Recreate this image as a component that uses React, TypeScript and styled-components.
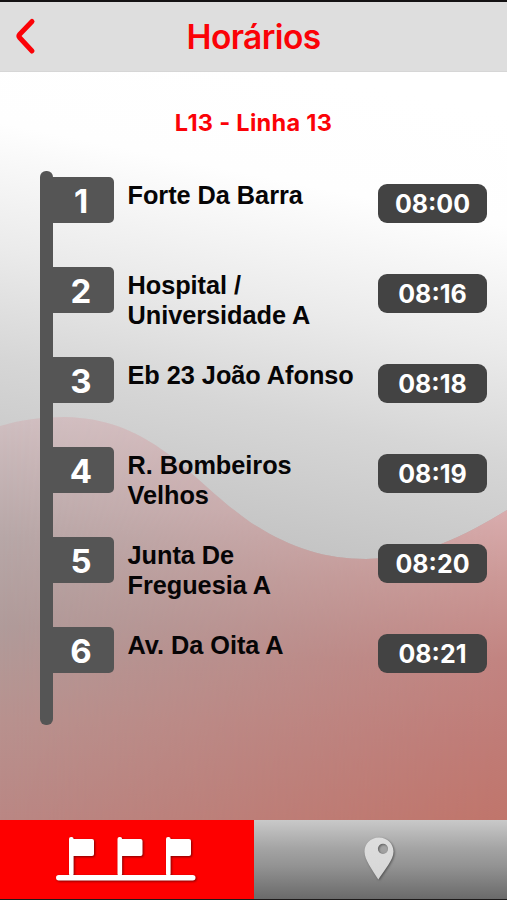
import React from "react";
import styled, { createGlobalStyle } from "styled-components";

const GlobalStyle = createGlobalStyle`
  * { box-sizing: border-box; }
  body { margin: 0; background: #fff; }
`;

const Screen = styled.div`
  width: 507px;
  height: 900px;
  display: flex;
  flex-direction: column;
  overflow: hidden;
  border-top: 2px solid #141213;
  border-bottom: 1px solid #1c1a1a;
  font-family: Inter, "Liberation Sans", sans-serif;
`;

const Header = styled.header`
  height: 70px;
  flex: none;
  display: grid;
  grid-template-columns: 52px 1fr 52px;
  align-items: center;
  background: #dedede;
  border-bottom: 1px solid #d6d6d6;
`;

const BackButton = styled.button`
  border: 0;
  padding: 0;
  margin: 0;
  background: none;
  width: 52px;
  height: 69px;
  svg { display: block; }
`;

const Title = styled.h1`
  margin: 0;
  padding-top: 1px;
  text-align: center;
  font-size: 33.5px;
  line-height: 40px;
  font-weight: 620;
  letter-spacing: -0.6px;
  color: #fb0207;
`;

const Main = styled.main`
  position: relative;
  flex: 1;
  min-height: 0;
  display: flex;
  flex-direction: column;
`;

const Backdrop = styled.svg`
  position: absolute;
  inset: 0;
  width: 507px;
  height: 748px;
  z-index: -1;
`;

const LineName = styled.h2`
  margin: 36px 0 0;
  height: 30px;
  text-align: center;
  font-size: 23.5px;
  line-height: 30px;
  font-weight: 700;
  letter-spacing: 0.3px;
  color: #fb0207;
`;

const Timetable = styled.div`
  display: flex;
  margin: 33px 20px 0 40px;
`;

const Pole = styled.div`
  width: 13px;
  height: 554px;
  flex: none;
  border-radius: 6px;
  background: #555;
`;

const Stops = styled.ol`
  list-style: none;
  margin: 0;
  padding: 6px 0 0;
  flex: 1;
`;

const Stop = styled.li`
  height: 90.08px;
  display: grid;
  grid-template-columns: 61px 1fr 109px;
  align-items: start;
`;

const Flag = styled.span`
  height: 46px;
  border-radius: 0 5px 5px 0;
  background: #555;
  color: #fff;
  font-size: 33px;
  line-height: 48px;
  font-weight: 700;
  text-align: center;
  padding-right: 5px;
`;

const StopName = styled.span`
  padding: 3px 0 0 13.5px;
  white-space: pre-line;
  font-family: "Liberation Sans", Arial, sans-serif;
  font-size: 25.3px;
  line-height: 30px;
  font-weight: 700;
  letter-spacing: -0.03px;
  color: #060506;
`;

const Time = styled.time`
  margin-top: 7px;
  height: 39px;
  border-radius: 9px;
  background: #434343;
  color: #fff;
  font-size: 25px;
  line-height: 40px;
  font-weight: 650;
  letter-spacing: 0;
  text-align: center;
`;

const TabBar = styled.nav`
  height: 79px;
  flex: none;
  display: flex;
`;

const Tab = styled.button<{ $active?: boolean }>`
  border: 0;
  padding: 0;
  flex: ${(p) => (p.$active ? "0 0 254px" : "1")};
  background: ${(p) =>
    p.$active
      ? "#fe0000"
      : "linear-gradient(#c9c9c9 0%, #a2a2a2 38%, #939393 58%, #6a6a6a 100%)"};
  svg { display: block; }
`;

const stops = [
  { name: "Forte Da Barra", time: "08:00" },
  { name: "Hospital /\nUniversidade A", time: "08:16" },
  { name: "Eb 23 João Afonso", time: "08:18" },
  { name: "R. Bombeiros\nVelhos", time: "08:19" },
  { name: "Junta De\nFreguesia A", time: "08:20" },
  { name: "Av. Da Oita A", time: "08:21" },
];

const WAVE =
  "M0 426 C20 420 42 417 65 417 C155 419 190 480 250 522 C290 548 325 559 366 559 C420 558 465 536 507 510 V820 H0Z";

function WaveBackdrop() {
  return (
    <Backdrop viewBox="0 72 507 748" aria-hidden="true">
      <defs>
        <linearGradient id="sky" gradientUnits="userSpaceOnUse" x1="300" y1="72" x2="190" y2="610">
          <stop offset="0" stopColor="#fff" />
          <stop offset="0.2" stopColor="#fefefe" />
          <stop offset="0.42" stopColor="#ebebeb" />
          <stop offset="0.62" stopColor="#d6d6d6" />
          <stop offset="1" stopColor="#b9b9b9" />
        </linearGradient>
        <linearGradient id="cool" gradientUnits="userSpaceOnUse" x1="0" y1="417" x2="0" y2="820">
          <stop offset="0" stopColor="#d0bfc1" />
          <stop offset="0.3" stopColor="#b7a7a7" />
          <stop offset="0.52" stopColor="#b09b9a" />
          <stop offset="0.75" stopColor="#b8928f" />
          <stop offset="1" stopColor="#ba8784" />
        </linearGradient>
        <linearGradient id="warm" gradientUnits="userSpaceOnUse" x1="0" y1="417" x2="0" y2="820">
          <stop offset="0" stopColor="#e0babd" />
          <stop offset="0.23" stopColor="#d9adae" />
          <stop offset="0.4" stopColor="#cc9896" />
          <stop offset="0.6" stopColor="#c28481" />
          <stop offset="0.8" stopColor="#c07b76" />
          <stop offset="1" stopColor="#c0756b" />
        </linearGradient>
        <linearGradient id="across">
          <stop offset="0" stopColor="#000" />
          <stop offset="1" stopColor="#fff" />
        </linearGradient>
        <mask id="fade" maskUnits="userSpaceOnUse" x="0" y="410" width="507" height="410">
          <rect x="0" y="410" width="507" height="410" fill="url(#across)" />
        </mask>
      </defs>
      <rect x="0" y="72" width="507" height="748" fill="url(#sky)" />
      <path d={WAVE} fill="url(#cool)" />
      <path d={WAVE} fill="url(#warm)" mask="url(#fade)" />
    </Backdrop>
  );
}

function StopsIcon() {
  return (
    <svg width="254" height="79" viewBox="0 0 254 79" fill="#fff">
      <g style={{ filter: "drop-shadow(1.2px 1.2px 0.8px rgba(90,0,0,.75))" }}>
        <rect x="56" y="55" width="139.500" height="5.500" rx="2.750" />
        {[69, 117.500, 166].map((x) => (
          <g key={x}>
            <rect x={x} y="17" width="4.600" height="39" rx="2" />
            <rect x={x + 2} y="19" width="23" height="17" rx="2" />
          </g>
        ))}
      </g>
    </svg>
  );
}

function PinIcon() {
  return (
    <svg width="253" height="79" viewBox="0 0 253 79">
      <defs>
        <linearGradient id="pin" x1="0" y1="0" x2="0" y2="1">
          <stop offset="0" stopColor="#dedede" />
          <stop offset="1" stopColor="#d6d6d6" />
        </linearGradient>
      </defs>
      <path
        style={{ filter: "drop-shadow(1px 1px 1px rgba(60,60,60,.7))" }}
        fill="url(#pin)"
        fillRule="evenodd"
        d="M125 17.500C116.500 17.500 110.500 24 110.500 31.500C110.500 40 118 49 124.300 59.500C131 49 139.500 40 139.500 31.500C139.500 24 133.500 17.500 125 17.500ZM129 23.700a5.100 5.100 0 1 1 0 10.200a5.100 5.100 0 1 1 0-10.200Z"
      />
    </svg>
  );
}

export default function App() {
  return (
    <Screen>
      <GlobalStyle />
      <Header>
        <BackButton aria-label="Voltar">
          <svg width="52" height="69" viewBox="0 0 52 69" fill="none">
            <path
              d="M32 19.500 L19.500 32.500 Q18.300 34 19.500 35.500 L32 49"
              stroke="#fb0207"
              strokeWidth="5"
              strokeLinecap="round"
              strokeLinejoin="round"
            />
          </svg>
        </BackButton>
        <Title>Horários</Title>
      </Header>
      <Main>
        <WaveBackdrop />
        <LineName>L13 - Linha 13</LineName>
        <Timetable>
          <Pole />
          <Stops>
            {stops.map((s, i) => (
              <Stop key={s.time}>
                <Flag>{i + 1}</Flag>
                <StopName>{s.name}</StopName>
                <Time>{s.time}</Time>
              </Stop>
            ))}
          </Stops>
        </Timetable>
      </Main>
      <TabBar>
        <Tab $active aria-label="Paragens">
          <StopsIcon />
        </Tab>
        <Tab aria-label="Mapa">
          <PinIcon />
        </Tab>
      </TabBar>
    </Screen>
  );
}
